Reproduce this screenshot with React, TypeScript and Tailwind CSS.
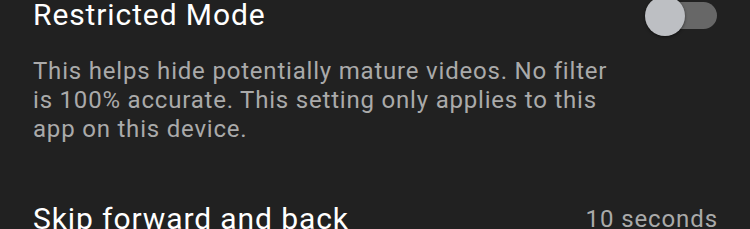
export default function App() {
  return (
    <div
      className="h-[229px] w-[750px] overflow-hidden bg-[#212121] pl-[33px] pr-[32px]"
      style={{ fontFamily: "Roboto, 'Noto Sans', sans-serif" }}
    >
      {/* restricted mode */}
      <div className="-mt-[2px] flex items-center justify-between">
        <span className="text-[30px] leading-[34px] tracking-[0.9px] text-white">Restricted Mode</span>
        <Toggle />
      </div>
      <p className="mt-[25px] w-[600px] text-[24px] leading-[29px] tracking-[0.8px] text-[#aaaaaa]">
        This helps hide potentially mature videos. No filter is 100% accurate. This setting only
        applies to this app on this device.
      </p>

      {/* skip */}
      <div className="mt-[58px] flex items-center justify-between">
        <span className="text-[30px] leading-[34px] tracking-[0.9px] text-white">Skip forward and back</span>
        <span className="text-[24px] leading-[34px] tracking-[0.9px] text-[#aaaaaa]">10 seconds</span>
      </div>
    </div>
  );
}

function Toggle() {
  return (
    <div className="relative mr-[1px] h-[27px] w-[62px] rounded-full bg-[#676767]">
      <div className="absolute -left-[10px] top-[-6px] h-[40px] w-[40px] rounded-full bg-[#bdbfc3] shadow-[0_1px_3px_rgba(0,0,0,0.5)]" />
    </div>
  );
}
